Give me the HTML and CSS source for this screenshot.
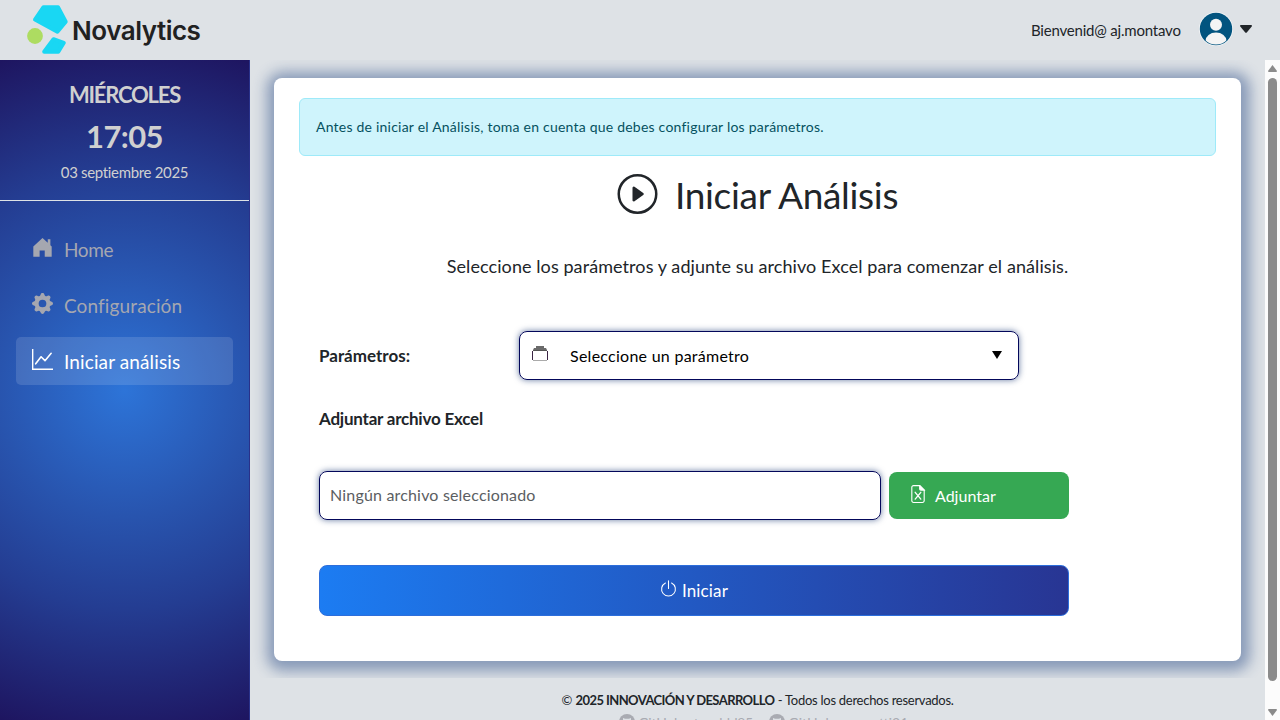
FILE: index.html
```html
<!DOCTYPE html>
<html lang="es">
<head>
<meta charset="utf-8">
<title>Novalytics</title>
<link rel="stylesheet" href="styles.css">
</head>
<body>
<header class="topbar">
  <div class="brand">
    <svg class="brand-mark" width="42" height="50" viewBox="0 0 42 50"><g fill="#19d7f3" stroke="#19d7f3" stroke-width="4" stroke-linejoin="round"><path d="M16.500 3.200h14.500l7.700 14.600-8.300 10L8 15.600z"/><path d="M26.500 35.200l10.300 3.600-5.500 8.900H17.200z"/></g><circle cx="8" cy="32" r="7.900" fill="#addc61"/></svg>
    <span class="brand-name">Novalytics</span>
  </div>
  <div class="user">
    <span class="welcome">Bienvenid@ aj.montavo</span>
    <svg class="avatar" width="34" height="34" viewBox="0 0 34 34"><defs><clipPath id="disc"><circle cx="17" cy="17" r="15.500"/></clipPath></defs><circle cx="17" cy="17" r="17" fill="#f4f6f8"/><circle cx="17" cy="17" r="16.200" fill="#02547f"/><circle cx="17" cy="12.700" r="6" fill="#f4f4f4"/><ellipse cx="17" cy="29" rx="10.500" ry="8.500" fill="#f4f4f4" clip-path="url(#disc)"/></svg>
    <svg class="caret" width="12" height="8" viewBox="0 0 12 8"><path d="M.8 0h10.400q1.200.4.500 1.500L7 7.300q-1 1-2 0L.3 1.500Q-.4.400.8 0z" fill="#212529"/></svg>
  </div>
</header>
<div class="shell">
  <aside class="sidebar">
    <div class="clock">
      <div class="day">MIÉRCOLES</div>
      <div class="time">17:05</div>
      <div class="date">03 septiembre 2025</div>
    </div>
    <nav class="menu">
      <a class="item"><svg width="21" height="21" viewBox="0 0 16 16" fill="currentColor"><path d="M8 .8 1 7.200V15h4.800v-4.700h3.900V15H15V7.200l-1-1V1.700h-2v2.600z"/></svg><span class="t-home">Home</span></a>
      <a class="item"><svg width="21" height="21" viewBox="0 0 16 16" fill="currentColor"><path d="M9.405 1.050c-.413-1.400-2.397-1.400-2.810 0l-.1.340a1.464 1.464 0 0 1-2.105.872l-.310-.170c-1.283-.698-2.686.705-1.987 1.987l.169.311c.446.820.023 1.841-.872 2.105l-.340.100c-1.400.413-1.400 2.397 0 2.810l.340.100a1.464 1.464 0 0 1 .872 2.105l-.170.310c-.698 1.283.705 2.686 1.987 1.987l.311-.169a1.464 1.464 0 0 1 2.105.872l.100.340c.413 1.400 2.397 1.400 2.810 0l.100-.340a1.464 1.464 0 0 1 2.105-.872l.310.170c1.283.698 2.686-.705 1.987-1.987l-.169-.311a1.464 1.464 0 0 1 .872-2.105l.340-.100c1.400-.413 1.400-2.397 0-2.810l-.340-.100a1.464 1.464 0 0 1-.872-2.105l.170-.310c.698-1.283-.705-2.686-1.987-1.987l-.311.169a1.464 1.464 0 0 1-2.105-.872zM8 10.930a2.929 2.929 0 1 1 0-5.860 2.929 2.929 0 0 1 0 5.860z"/></svg><span class="t-config">Configuración</span></a>
      <a class="item active"><svg width="21" height="21" viewBox="0 0 16 16" fill="none" stroke="currentColor"><path d="M.5 0v15.500H16" stroke-width="1.100"/><path d="M2.800 11.300 6.900 5.900l3 3L14.600 3.300" stroke-width="1.200" stroke-linecap="round" stroke-linejoin="round"/></svg><span class="t-start">Iniciar análisis</span></a>
    </nav>
  </aside>
  <div class="scroller">
    <main class="main">
      <section class="card">
        <div class="alert"><span class="t-alert">Antes de iniciar el Análisis, toma en cuenta que debes configurar los parámetros.</span></div>
        <h1 class="title"><svg width="41" height="40" viewBox="0 0 16 16" fill="#212529"><circle cx="8" cy="8" r="7.500" fill="none" stroke="#212529"/><path d="M6.270 5.055a.5.500 0 0 1 .520.038l3.500 2.500a.5.500 0 0 1 0 .814l-3.500 2.500A.5.500 0 0 1 6 10.500v-5a.5.500 0 0 1 .270-.445z"/></svg><span class="t-title">Iniciar Análisis</span></h1>
        <p class="subtitle">Seleccione los parámetros y adjunte su archivo Excel para comenzar el análisis.</p>
        <div class="form">
          <div class="row-param">
            <label class="label t-param">Parámetros:</label>
            <div class="select">
              <svg class="select-icon" width="16" height="16" viewBox="0 0 16 16"><path d="M4 0h8v2h2l1 2H1l1-2h2z" fill="#6b6b6b"/><path d="M.5 5v9M15.500 5v9" stroke="#3b2444"/><path d="M1 4.500h14" stroke="#555"/><path d="M1 14.500h14" stroke="#aaa"/></svg>
              <span class="select-text">Seleccione un parámetro</span>
              <svg class="select-arrow" width="10" height="8" viewBox="0 0 10 8"><path d="M0 0h10L5 8z"/></svg>
            </div>
          </div>
          <label class="label t-file">Adjuntar archivo Excel</label>
          <div class="row-file">
            <div class="file"><span class="file-text">Ningún archivo seleccionado</span></div>
            <div class="attach"><svg width="18" height="18" viewBox="0 0 16 16" fill="none" stroke="#fff"><path d="M9.500.5H4A1.500 1.500 0 0 0 2.500 2v12A1.500 1.500 0 0 0 4 15.500h8a1.500 1.500 0 0 0 1.500-1.500V4.500z"/><path d="M9.500.5v3a1 1 0 0 0 1 1h3z" fill="#fff"/><path d="m5.500 6.500 5 6m0-6-5 6" stroke-linecap="round" stroke-width="1.200"/></svg><span class="t-attach">Adjuntar</span></div>
          </div>
          <div class="start"><svg width="17" height="17" viewBox="0 0 16 16" fill="none" stroke="#fff" stroke-linecap="round"><path d="M8 .7v7.300"/><path d="M5.100 2.800A6.500 6.500 0 1 0 10.900 2.800"/></svg><span class="t-go">Iniciar</span></div>
        </div>
      </section>
    </main>
    <footer class="footer">
      <div class="copy"><span>©</span> <b>2025 INNOVACIÓN Y DESARROLLO</b> <span class="rights">- Todos los derechos reservados.</span></div>
      <div class="links">
        <span class="link"><svg width="16" height="16" viewBox="0 0 16 16"><circle cx="8" cy="8" r="8" fill="#a9abb2"/><path d="M4 4l2 .8h4L12 4v5q-1 3-4 3T4 9z" fill="#dee2e6"/></svg><span class="link-a">GitHub: stevehld85</span></span>
        <span class="link"><svg width="16" height="16" viewBox="0 0 16 16"><circle cx="8" cy="8" r="8" fill="#a9abb2"/><path d="M4 4l2 .8h4L12 4v5q-1 3-4 3T4 9z" fill="#dee2e6"/></svg><span class="link-b">GitHub: mmontti21</span></span>
      </div>
    </footer>
  </div>
  <div class="scrollbar">
    <svg width="9" height="7" viewBox="0 0 9 7"><path d="M4.500 0 9 6Q9 7 8 7H1Q0 7 0 6z" fill="#8b8b8b"/></svg>
    <div class="thumb"></div>
    <svg width="9" height="7" viewBox="0 0 9 7"><path d="M4.500 7 9 1Q9 0 8 0H1Q0 0 0 1z" fill="#8b8b8b"/></svg>
  </div>
</div>
</body>
</html>
```

FILE: styles.css
```css
* { box-sizing: border-box; }
body { margin: 0; width: 1280px; height: 720px; overflow: hidden; background: #dee2e6; color: #212529; font-family: Lato, "Open Sans", sans-serif; font-size: 16px; display: flex; flex-direction: column; white-space: nowrap; }
svg { display: block; flex: none; }
.topbar { height: 60px; flex: none; display: flex; justify-content: space-between; padding: 0 28px 0 27px; }
.brand { display: flex; align-items: flex-start; gap: 3px; padding-top: 4px; }
.brand-name { font-family: Inter, sans-serif; font-weight: 600; font-size: 26px; line-height: 32px; margin-top: 11px; letter-spacing: -.48px; color: #212121; }
.user { display: flex; align-items: center; }
.welcome { width: 150px; margin-right: 18px; font-size: 15px; line-height: 20px; letter-spacing: -.2px; padding-bottom: 1px; }
.avatar { margin-right: 7px; margin-top: -2px; }
.caret { margin-top: -2px; }
.shell { flex: 1; display: flex; min-height: 0; }
.sidebar { width: 250px; flex: none; border-right: 1px solid #29318a; background: radial-gradient(circle at 50% 50%, #2d74d8 0%, #2854ae 36%, #243d92 62%, #1e1560 100%); }
.clock { height: 141px; border-bottom: 1px solid #dee2e6; color: #d0d0d0; text-align: center; padding-top: 20px; }
.day { font-size: 22px; font-weight: 700; line-height: 30px; letter-spacing: -1.2px; }
.time { font-size: 31px; font-weight: 700; line-height: 40px; margin-top: 6px; letter-spacing: -.6px; }
.date { font-size: 15px; line-height: 20px; margin-top: 6px; letter-spacing: -.33px; }
.menu { padding: 24px 16px; display: flex; flex-direction: column; gap: 8px; }
.item { height: 48px; width: 217px; border-radius: 5px; display: flex; align-items: center; gap: 11px; padding-left: 16px; color: #a5a7b0; font-size: 19px; letter-spacing: .12px; }
.item svg { margin-top: -3px; }
.t-home { letter-spacing: -.35px; }
.active { background: rgba(255,255,255,.13); color: #fff; }
.scroller { flex: 1; display: flex; flex-direction: column; min-width: 0; }
.main { height: 618px; flex: none; padding: 18px 24px 17px; overflow: hidden; }
.card { height: 583px; background: #fff; border-radius: 8px; box-shadow: 1px 2px 14px 8px rgba(42,76,133,.48); padding: 20px 25px; }
.alert { height: 58px; border: 1px solid #9eeaf9; border-radius: 6px; background: #cff4fc; color: #055160; display: flex; align-items: center; padding: 0 0 2px 16px; font-size: 14px; letter-spacing: .22px; }
.title { height: 48px; margin: 14px 0 0; display: flex; justify-content: center; gap: 17px; font-weight: 400; font-size: 37px; line-height: 50px; letter-spacing: -.3px; }
.title svg { margin-top: 4px; }
.subtitle { margin: 34px 0 0; text-align: center; font-size: 18px; line-height: 28px; letter-spacing: .08px; }
.form { width: 750px; margin: 51px 0 0 20px; }
.row-param { display: flex; align-items: center; justify-content: space-between; padding-right: 50px; }
.label { font-size: 17px; line-height: 24px; font-weight: 700; display: block; }
.select { width: 500px; height: 49px; border: 1px solid #03075a; border-radius: 8px; box-shadow: 0 0 6px rgba(20,50,110,.65); display: flex; align-items: center; padding: 0 16px 1px 12px; color: #000; font-size: 16px; letter-spacing: .26px; }
.select-icon { margin-top: -2px; }
.select-text { margin-left: 22px; }
.select-arrow { margin-left: auto; }
.t-file { margin-top: 27px; letter-spacing: -.22px; }
.row-file { display: flex; align-items: center; justify-content: space-between; margin-top: 40px; }
.file { width: 562px; height: 49px; border: 1px solid #03075a; border-radius: 8px; box-shadow: 0 0 6px rgba(20,50,110,.65); display: flex; align-items: center; padding: 0 0 2px 10px; color: #5b5e62; letter-spacing: .18px; }
.attach { width: 180px; height: 47px; border-radius: 8px; background: #36a853; color: #fff; display: flex; align-items: center; gap: 8px; padding: 0 0 1px 20px; font-size: 16px; }
.attach svg { margin-top: -2px; }
.start { height: 51px; margin-top: 45px; border: 1px solid #2d6edb; border-radius: 8px; background: linear-gradient(90deg, #1c7cf2, #283593); display: flex; align-items: center; justify-content: center; gap: 5px; color: #fff; font-size: 17px; letter-spacing: .15px; }
.start svg { margin-top: -4px; }
.footer { text-align: center; padding-top: 13px; font-size: 13px; }
.copy { line-height: 18px; }
.copy b { letter-spacing: -.58px; }
.rights { letter-spacing: -.27px; }
.links { display: flex; justify-content: center; gap: 18px; margin: 5px 0 0 16px; color: #a9abb2; font-size: 14px; line-height: 18px; }
.link { display: flex; gap: 4px; }
.link-a { width: 112px; letter-spacing: -.3px; text-align: left; }
.link-b { width: 124px; text-align: left; }
.scrollbar { width: 15px; flex: none; background: #fcfcfc; display: flex; flex-direction: column; align-items: center; padding: 5px 0 4px; }
.thumb { width: 9px; height: 603px; margin: 6px 0 auto; border-radius: 5px; background: #8b8b8b; }
```
